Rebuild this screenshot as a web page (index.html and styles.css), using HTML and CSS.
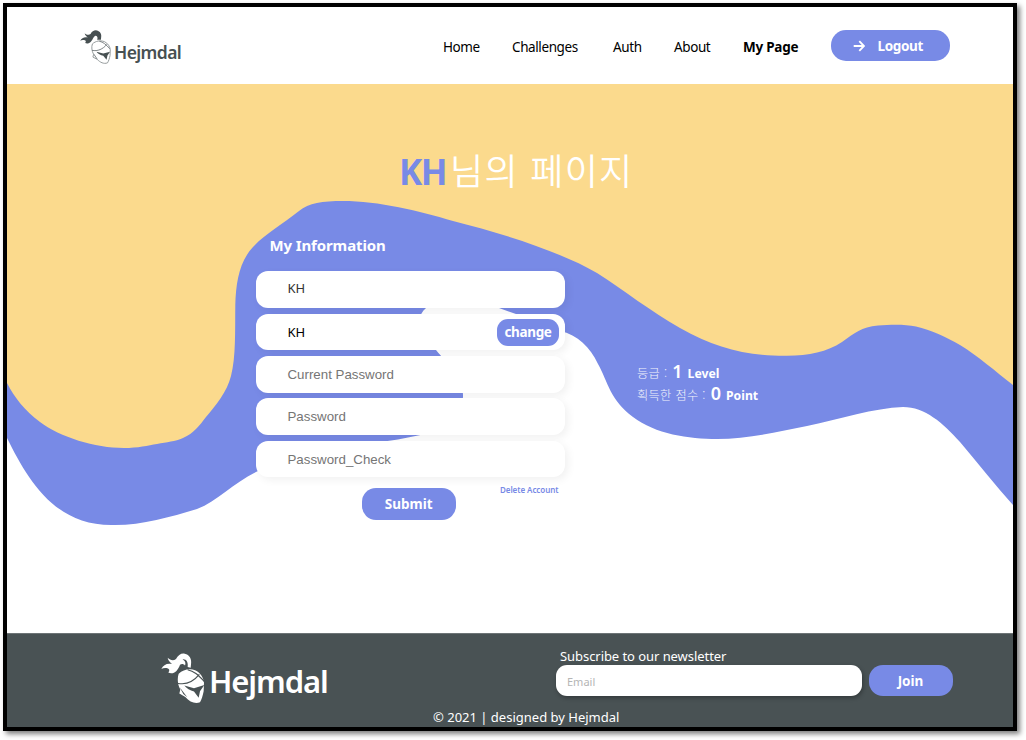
FILE: index.html
```html
<!DOCTYPE html>
<html lang="ko">
<head>
<meta charset="utf-8">
<title>Hejmdal</title>
<link rel="stylesheet" href="styles.css">
</head>
<body>
<div class="frame">
  <header class="header">
    <a class="brand">
      <svg class="brand-icon" viewBox="17 16 132 152" preserveAspectRatio="none">
        <path class="plume" d="M18 64C24 52 34 46 50 49C43 43 38 37 37 30C45 38 54 40 62 34C68 22 78 16 88 18C103 21 110 34 107 50L106 60L90 60C94 50 91 42 82 42C74 46 73 57 64 67C56 76 47 78 39 74C43 68 43 64 38 62C31 60 24 60 18 64Z"/>
        <path class="shell" d="M70 78C84 65 103 61 121 68C136 76 145 90 146 105L145 130C142 144 139 155 134 163C118 169 103 161 90 147L72 137L75 125C67 110 65 92 70 78Z"/>
        <path class="crease" d="M68 107C92 112 114 102 132 80M99 66C116 70 127 80 144 100M76 124L90 146"/>
        <path class="visor" d="M87 113L116 121L145 113L134 130L130 149L116 131C104 128 94 122 87 113Z"/>
      </svg>
      <span class="brand-name">Hejmdal</span>
    </a>
    <nav class="nav">
      <a>Home</a><a>Challenges</a><a>Auth</a><a>About</a><a class="active">My Page</a>
    </nav>
    <button class="btn logout">
      <svg class="arrow" viewBox="0 0 12 12"><path d="M.7 6H11M6.300 1.200L11 6L6.300 10.800"/></svg>
      <span>Logout</span>
    </button>
  </header>

  <main class="hero">
    <svg class="waves" viewBox="7 84 1006 549" preserveAspectRatio="none">
      <path class="wave-blue" d="M7 84H1013V505C995 485 978 463 960 442C943 423 925 407 903 407C874 408 840 419 807 426C777 432 747 439 717 439C689 439 655 434 633 417C610 400 608 382 598 364C590 347 578 335 560 331C545 325 530 318 516 314L499 308C475 301 440 295 426 308C414 318 421 333 436 350C448 365 464 377 463 397C461 421 445 430 418 435.500C365 447 305 448 258 471C234 482 218 501 197 509C170 517 143 525 115 525C54 527 27 478 7 438Z"/>
      <path class="wave-yellow" d="M7 84H1013V385C995 371 978 356 960 345C946 337 931 330 916 326.500C905 324 890 324.500 878 325.500C861 327 855 333 842 342C827 352 809 355.700 787 355.700C745 356 716 348 680 328C650 311 625 291 597 273C563 253 505 234 453 221C420 211 378 201 343 201C322 201 309 203 299 211C283 224 265 234 253 247C239 262 236 283 235.300 305C235 330 236 357 231 376C227 392 216 405 206 417C199 426 194 433 183 438C175 441.500 167 442 157 444C148 445.500 138 448 124 448C95 448 60 437 40 422C25 411 14 397 7 383Z"/>
    </svg>
    <div class="content">
      <h1 class="title"><strong>KH</strong><span>님의 페이지</span></h1>
      <div class="columns">
        <section class="profile">
          <h2 class="section-title">My Information</h2>
          <form class="form">
            <div class="field"><span class="value dim">KH</span></div>
            <div class="field"><span class="value">KH</span><button type="button" class="btn change">change</button></div>
            <div class="field"><span class="hint">Current Password</span></div>
            <div class="field"><span class="hint">Password</span></div>
            <div class="field"><span class="hint">Password_Check</span></div>
          </form>
          <div class="actions">
            <button class="btn submit">Submit</button>
            <a class="delete">Delete Account</a>
          </div>
        </section>
        <section class="stats">
          <p class="stat"><span class="label">등급 :</span><b class="number">1</b><b>Level</b></p>
          <p class="stat"><span class="label">획득한 점수 :</span><b class="number">0</b><b>Point</b></p>
        </section>
      </div>
    </div>
  </main>

  <footer class="footer">
    <div class="footer-top">
      <a class="brand light">
        <svg class="brand-icon" viewBox="17 16 132 152" preserveAspectRatio="none">
          <path class="plume" d="M18 64C24 52 34 46 50 49C43 43 38 37 37 30C45 38 54 40 62 34C68 22 78 16 88 18C103 21 110 34 107 50L106 60L97 58C99 45 94 34 82 35C92 40 91 49 89 53C85 48 79 47 74 51C70 62 63 74 52 76C46 77 42 76 39 74C43 68 43 64 38 62C31 60 24 60 18 64Z"/>
          <path class="shell" d="M70 78C84 65 103 61 121 68C136 76 145 90 146 105L145 130C142 144 139 155 134 163C118 169 103 161 90 147L72 137L75 125C67 110 65 92 70 78Z"/>
          <path class="crease" d="M66 106C92 112 114 102 132 80M97 66C116 70 127 80 148 102"/>
          <path class="visor" d="M87 113L116 121L147 111L134 130L130 149L116 131C104 128 94 122 87 113ZM73 118L96 148L84 138Z"/>
        </svg>
        <span class="brand-name">Hejmdal</span>
      </a>
      <div class="newsletter">
        <p class="newsletter-title">Subscribe to our newsletter</p>
        <div class="subscribe">
          <div class="email">Email</div>
          <button class="btn join">Join</button>
        </div>
      </div>
    </div>
    <p class="copyright">© 2021 | designed by Hejmdal</p>
  </footer>
</div>
</body>
</html>
```

FILE: styles.css
```css
* { box-sizing: border-box; }
body, h1, h2, p { margin: 0; }
body {
  height: 740px;
  padding: 3px;
  overflow: hidden;
  background: #fff;
  font-family: "Noto Sans", "Noto Sans CJK KR", sans-serif;
  color: #000;
}
.frame {
  display: flex;
  flex-direction: column;
  width: 1014px;
  height: 728px;
  border: 4px solid #000;
  box-shadow: 3px 3px 5px rgba(0, 0, 0, .5);
  background: #fff;
}
.btn {
  display: flex;
  align-items: center;
  justify-content: center;
  padding: 0;
  border: 0;
  background: #788ae6;
  color: #fff;
  font: 700 13.500px/20px "Noto Sans", sans-serif;
  letter-spacing: -.35px;
}

/* Header */
.header { display: flex; height: 77px; padding-left: 73px; }
.brand { display: flex; color: #475052; }
.header .brand { width: 363px; padding-top: 23px; gap: 3px; }
.header .brand-icon { width: 31px; height: 34px; }
.header .brand-name { margin-top: 10px; font-size: 17.500px; line-height: 24px; font-weight: 600; letter-spacing: -.6px; }
.plume { fill: #475052; }
.shell { fill: #fff; stroke: #8d9495; stroke-width: 4; }
.crease { fill: none; stroke: #737b7d; stroke-width: 4; }
.visor { fill: #475052; }
.nav {
  display: grid;
  grid-template-columns: 69px 101px 61px 69px 88px;
  padding-top: 30px;
  font-size: 13.500px;
  line-height: 20px;
  letter-spacing: -.4px;
  white-space: nowrap;
}
.active { font-weight: 700; letter-spacing: -.25px; }
.logout { width: 118.500px; height: 31px; margin-top: 23px; padding-right: 5px; border-radius: 15px; gap: 13px; }
.arrow { width: 12px; height: 12px; fill: none; stroke: #fff; stroke-width: 1.900; }

/* Page body */
.hero { position: relative; height: 549px; }
.waves { position: absolute; inset: 0; width: 100%; height: 100%; }
.wave-blue { fill: #788ae6; }
.wave-yellow { fill: #fbda8d; }
.content { position: relative; padding-top: 60px; }
.title {
  display: flex;
  padding-left: 392px;
  height: 54px;
  line-height: 54px;
  font-size: 36px;
  font-weight: 300;
  color: #fff;
  white-space: nowrap;
}
.title strong { width: 51px; padding-top: 1px; color: #788ae6; font-weight: 700; font-size: 35px; letter-spacing: -1.500px; }
.title span { margin-top: -2px; font-family: "Noto Sans CJK KR", sans-serif; font-weight: 350; letter-spacing: 1.300px; }
.columns { display: flex; gap: 72px; padding: 35px 0 0 249px; }
.profile { width: 309px; }
.section-title { padding-left: 13.500px; font-size: 15px; line-height: 24px; letter-spacing: -.12px; color: #fff; }
.form { display: grid; gap: 5.700px; margin-top: 14.300px; }
.field {
  display: flex;
  align-items: center;
  justify-content: space-between;
  height: 36.700px;
  padding: 0 6px 0 31.500px;
  border-radius: 12px;
  background: #fff;
  box-shadow: 3px 3px 9px rgba(0, 0, 0, .06);
}
.value { font-size: 13px; line-height: 20px; }
.dim { color: #333; margin-top: -3px; }
.hint { padding-top: 1px; font: 13.300px/20px "Liberation Sans", sans-serif; color: #757575; }
.change { width: 62px; height: 27px; border-radius: 11px; }
.actions { display: flex; gap: 44.500px; padding: 10.500px 0 0 106px; }
.submit { width: 93.500px; height: 32.500px; border-radius: 14px; letter-spacing: 0; }
.delete { margin-top: -4px; font-size: 8px; line-height: 12px; font-weight: 600; letter-spacing: -.06px; color: #788ae6; white-space: nowrap; }
.stats { padding-top: 127px; color: #fff; font-size: 12.200px; }
.stat { display: flex; align-items: baseline; height: 22px; line-height: 22px; gap: 5px; }
.label { font-family: "Noto Sans CJK KR", sans-serif; font-weight: 300; letter-spacing: .35px; opacity: .9; }
.number { font-size: 18px; font-weight: 600; }

/* Footer */
.footer { height: 94px; background: #495254; border-top: 1px solid #6d7476; color: #fff; }
.footer-top { display: flex; height: 73px; padding-left: 154px; }
.light { width: 395px; padding-top: 19px; gap: 4px; color: #fff; }
.light .brand-icon { width: 44px; height: 51px; }
.light .brand-name { margin-top: 7px; font-size: 31px; line-height: 42px; font-weight: 600; letter-spacing: -1.100px; }
.light .plume, .light .shell { fill: #fff; stroke: none; }
.light .crease { stroke: #495254; stroke-width: 3.500; }
.light .visor { fill: #495254; }
.newsletter { padding-top: 12px; }
.newsletter-title { padding-left: 4px; font-size: 13px; line-height: 20px; height: 19px; letter-spacing: -.06px; }
.subscribe { display: flex; gap: 7px; }
.email {
  width: 305.500px;
  height: 31px;
  padding: 2px 0 0 11px;
  border-radius: 11px;
  background: #fff;
  box-shadow: 1px 2px 4px rgba(0, 0, 0, .3);
  color: #b5b5b5;
  font-size: 11px;
  line-height: 30px;
}
.join { width: 84px; height: 31px; padding-top: 1px; border-radius: 14px; letter-spacing: 0; }
.copyright { padding-left: 426px; font-size: 13px; line-height: 20px; white-space: nowrap; }
```
